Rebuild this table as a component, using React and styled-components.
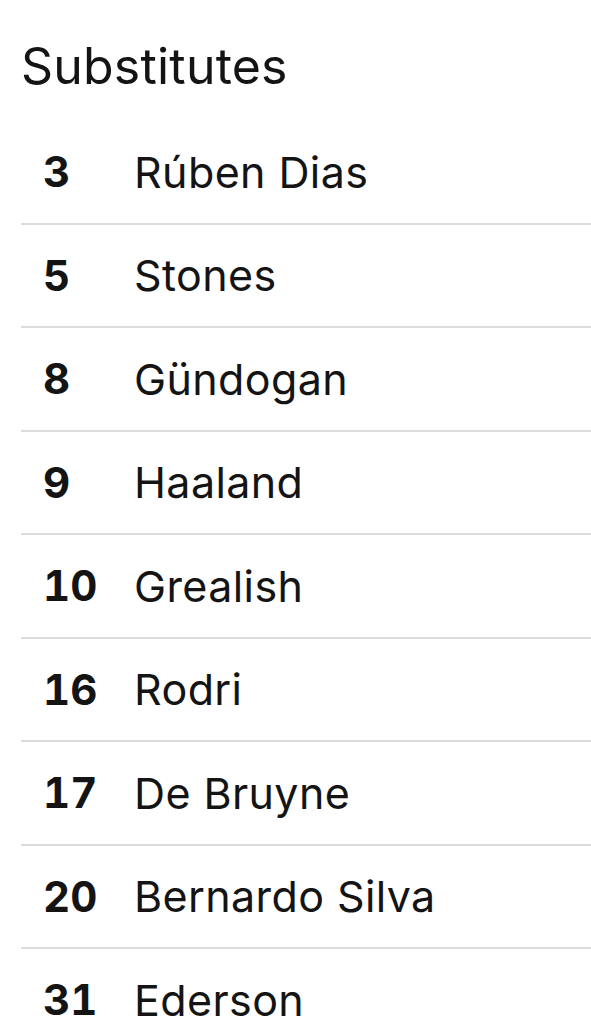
import React from 'react';
import styled, { createGlobalStyle } from 'styled-components';

const GlobalStyle = createGlobalStyle`
  body {
    margin: 0;
    background: #ffffff;
    color: #141414;
    font-family: Inter, Lato, "Noto Sans", sans-serif;
    font-variant-ligatures: none;
  }
`;

const StyledSection = styled.section`
  padding: 0 0 0 21px;
  overflow: hidden;
  height: 1032px;
`;

const Heading = styled.h2`
  margin: 0;
  padding: 36px 0 0;
  height: 85px;
  font-size: 50px;
  font-weight: 400;
  line-height: 60px;
  letter-spacing: 0.2px;
`;

const List = styled.ul`
  list-style: none;
  margin: 0;
  padding: 0;
`;

const Row = styled.li`
  display: flex;
  align-items: center;
  height: 101.5px;
  border-bottom: 2px solid #dcdcdc;

  &:last-child {
    border-bottom: none;
  }
`;

const Number = styled.span`
  width: 91px;
  padding-left: 22px;
  font-size: 42px;
  font-weight: 700;
  font-variant-numeric: tabular-nums;
`;

const Name = styled.span`
  font-size: 43px;
  font-weight: 400;
  letter-spacing: 0.4px;
`;

const players = [
  ['3', 'Rúben Dias'],
  ['5', 'Stones'],
  ['8', 'Gündogan'],
  ['9', 'Haaland'],
  ['10', 'Grealish'],
  ['16', 'Rodri'],
  ['17', 'De Bruyne'],
  ['20', 'Bernardo Silva'],
  ['31', 'Ederson'],
];

const App = () => (
  <>
    <GlobalStyle />
    <StyledSection>
      <Heading>Substitutes</Heading>
      <List>
        {players.map(([num, name]) => (
          <Row key={num}>
            <Number>{num}</Number>
            <Name>{name}</Name>
          </Row>
        ))}
      </List>
    </StyledSection>
  </>
);

export default App;
